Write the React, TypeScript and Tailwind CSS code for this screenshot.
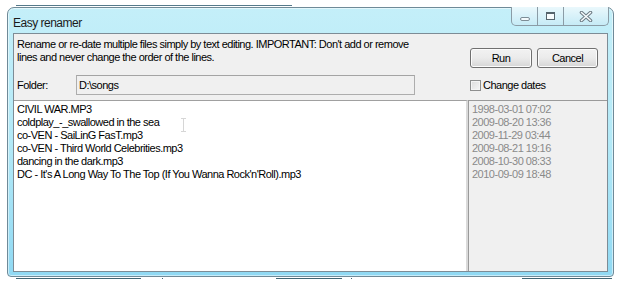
import { useState } from "react";

const files = [
  "CIVIL WAR.MP3",
  "coldplay_-_swallowed in the sea",
  "co-VEN - SaiLinG FasT.mp3",
  "co-VEN - Third World Celebrities.mp3",
  "dancing in the dark.mp3",
  "DC - It's A Long Way To The Top (If You Wanna Rock'n'Roll).mp3",
];

const dates = [
  "1998-03-01 07:02",
  "2009-08-20 13:36",
  "2009-11-29 03:44",
  "2009-08-21 19:16",
  "2008-10-30 08:33",
  "2010-09-09 18:48",
];

const WinButton = ({ label, width }: { label: string; width: string }) => (
  <button
    className={`${width} h-[20px] rounded-[3px] border border-[#707070] bg-gradient-to-b from-[#f2f2f2] via-[#ebebeb] to-[#d6d6d6] shadow-[inset_0_0_0_1px_#fcfcfc] text-center leading-[18px]`}
  >
    {label}
  </button>
);

const App = () => {
  const [changeDates, setChangeDates] = useState(false);

  return (
    <div className="min-h-[288px] bg-white font-['Liberation_Sans',Arial,sans-serif] text-[11px] leading-[13px] tracking-[-0.5px] text-black">
      {/* window behind, top edge */}
      <div className="pt-[5px]">
        <div className="ml-[16px] h-px w-[276px] bg-[#55798a]" />
      </div>

      {/* Window frame */}
      <div className="ml-[7px] mt-px flex h-[270px] w-[607px] flex-col rounded-t-[7px] rounded-b-[4px] border border-[#6f8a98] bg-gradient-to-b from-[#c4eff9] via-[#b3e9f7] to-[#90d9f3] px-[5px] pb-[4px] shadow-[inset_0_0_0_1px_rgba(255,255,255,0.5)]">
        {/* Title bar */}
        <div className="flex h-[25px] shrink-0 items-start">
          <span className="pt-[7px] text-[12px] leading-[16px] text-[#1b1b1b]">Easy renamer</span>
          <div className="-mr-px -mt-px ml-auto flex h-[19px] overflow-hidden rounded-b-[5px] border border-t-0 border-[#8b9ca6] bg-gradient-to-b from-[#eaf8fc] to-[#c6ebf6]">
            <div className="flex w-[26px] items-start justify-center border-r border-[#8b9ca6] pt-[10px]">
              <div className="h-[4px] w-[10px] rounded-[2px] border border-[#7d8d96] bg-[#f4fbfd]" />
            </div>
            <div className="flex w-[26px] items-start justify-center border-r border-[#8b9ca6] pt-[5px]">
              <div className="h-[8px] w-[9px] border border-t-2 border-[#56646c] bg-[#f8fcfd]" />
            </div>
            <div className="flex w-[44px] items-start justify-center pt-[4px]">
              <svg width="14" height="11" viewBox="0 0 14 11">
                <path d="M2.5 1.5 L11.5 9.5 M11.5 1.5 L2.5 9.5" stroke="#6f7d86" strokeWidth="3.6" strokeLinecap="round" />
                <path d="M2.5 1.5 L11.5 9.5 M11.5 1.5 L2.5 9.5" stroke="#f6fbfd" strokeWidth="1.5" strokeLinecap="round" />
              </svg>
            </div>
          </div>
        </div>

        {/* Client area */}
        <div className="flex h-[239px] flex-col border border-[#7d8c96] bg-[#f0f0f0]">
          {/* Header */}
          <div className="flex h-[66px] shrink-0">
            <div className="w-[456px] pl-[3px] pt-[4px]">
              <p>Rename or re-date multiple files simply by text editing. IMPORTANT: Don't add or remove</p>
              <p>lines and never change the order of the lines.</p>
              <div className="mt-[11px] flex h-[20px] items-center">
                <span className="w-[59px]">Folder:</span>
                <div className="flex h-[20px] w-[339px] items-center border border-[#adadad] border-t-[#a4a4a4] bg-[#f0f0f0] pl-[2px]">
                  D:\songs
                </div>
              </div>
            </div>
            <div className="flex-1 pt-[14px]">
              <div className="flex gap-[5px]">
                <WinButton label="Run" width="w-[62px]" />
                <WinButton label="Cancel" width="w-[61px]" />
              </div>
              <label className="mt-[7px] flex h-[20px] items-center gap-[2px]">
                <span
                  onClick={() => setChangeDates(!changeDates)}
                  className="h-[11px] w-[11px] border border-[#8e8f8f] bg-gradient-to-br from-[#dcdcdc] to-[#f6f6f6] shadow-[inset_0_0_0_1px_#f4f4f4]"
                />
                <span>Change dates</span>
              </label>
            </div>
          </div>

          {/* Body */}
          <div className="flex min-h-0 flex-1">
            <div className="relative w-[454px] border-r-2 border-t border-r-[#dadada] border-t-[#a0a0a0] bg-white pl-[3px] pt-[2px]">
              {files.map((f) => (
                <div key={f} className="whitespace-nowrap">
                  {f}
                </div>
              ))}
              {/* mouse I-beam */}
              <div className="absolute left-[167px] top-[17px] flex flex-col items-center">
                <div className="h-px w-[5px] bg-[#d6d6d6]" />
                <div className="h-[12px] w-px bg-[#d6d6d6]" />
                <div className="h-px w-[5px] bg-[#d6d6d6]" />
              </div>
            </div>
            <div className="flex-1 border-l border-t border-[#9a9a9a] bg-[#f0f0f0] pl-[3px] pt-[2px] text-[#8a8a8a]">
              {dates.map((d, i) => (
                <div key={i}>{d}</div>
              ))}
            </div>
          </div>
        </div>
      </div>

      {/* window behind, bottom edge */}
      <div className="relative h-[3px]">
        <div className="absolute left-[16px] top-px h-px w-[125px] bg-[#3f6676]" />
        <div className="absolute left-[162px] top-px h-px w-px bg-[#3f6676]" />
        <div className="absolute left-[276px] top-px h-px w-[66px] bg-[#3f6676]" />
        <div className="absolute left-[351px] top-px h-px w-px bg-[#3f6676]" />
        <div className="absolute left-[522px] top-px h-px w-[90px] bg-[#3f6676]" />
      </div>
    </div>
  );
};

export default App;
